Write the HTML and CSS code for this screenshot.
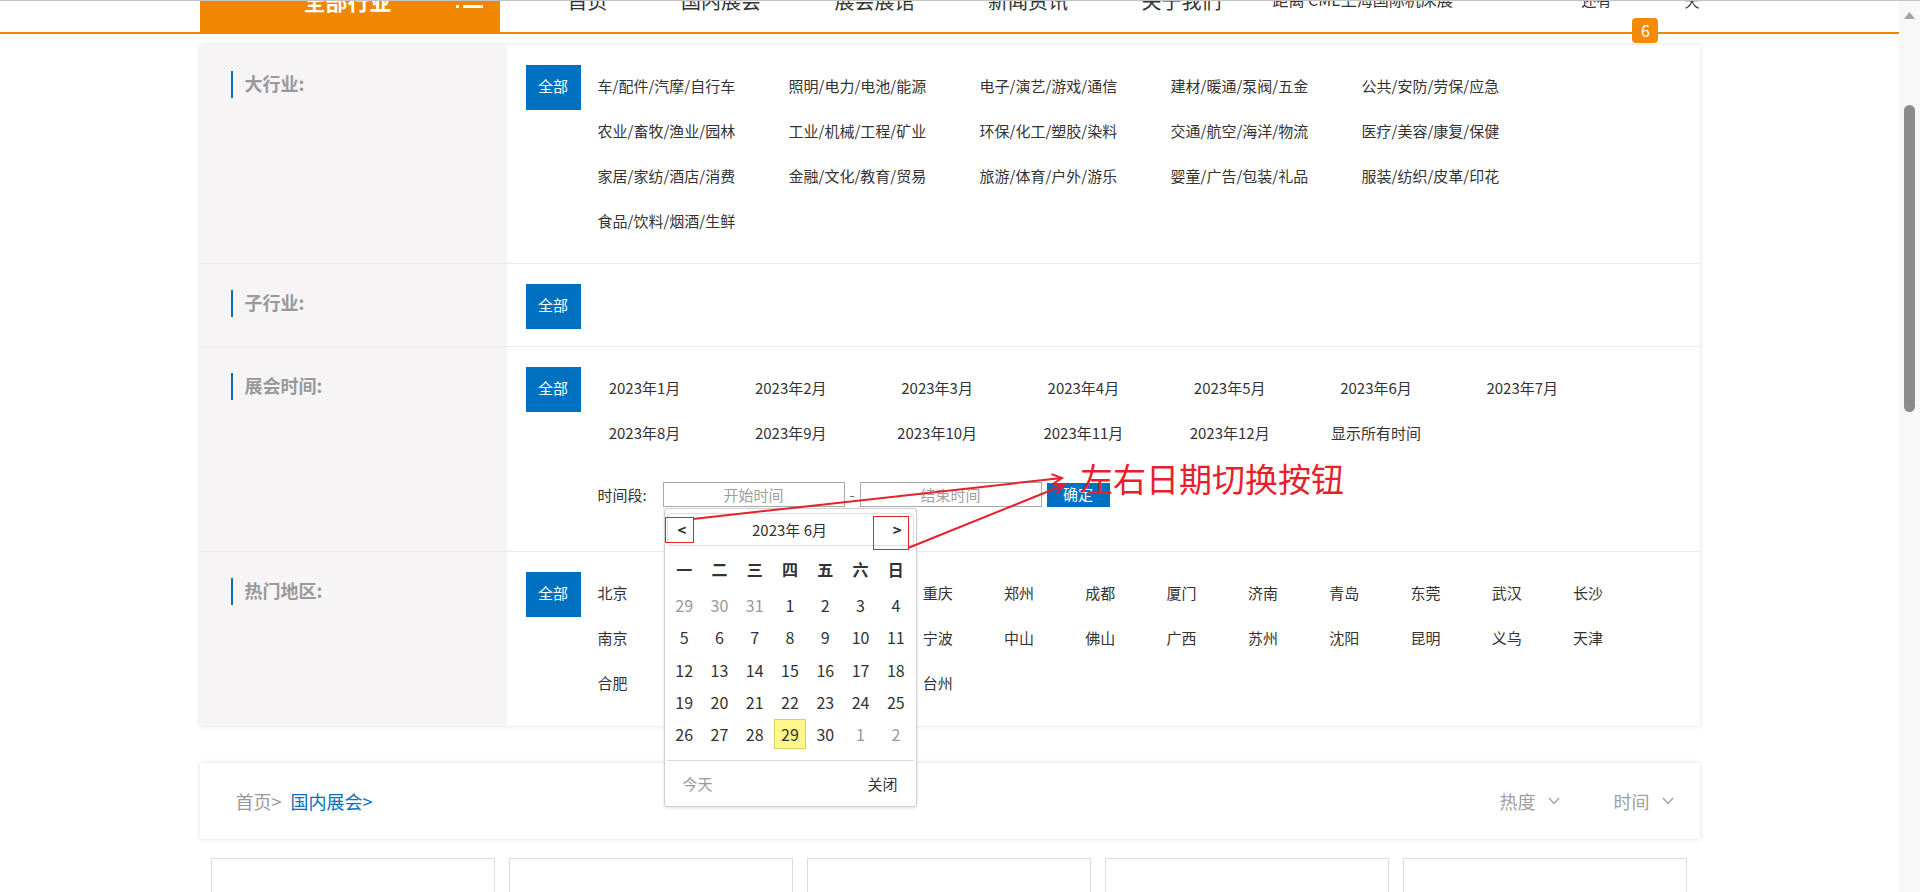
FILE: index.html
```html
<!DOCTYPE html>
<html lang="zh-CN">
<head>
<meta charset="utf-8">
<title>国内展会</title>
<link rel="stylesheet" href="styles.css">
</head>
<body>
<div class="topline"></div>
<div class="page">
  <header class="hd">
    <div class="hd-inner">
      <div class="cat">
        <span class="cat-t">全部行业</span>
        <svg class="cat-ic" width="27" height="22" viewBox="0 0 27 22"><rect x="0" y="2" width="3" height="3" fill="#fff"/><rect x="0" y="9" width="3" height="3" fill="#fff"/><rect x="0" y="16" width="3" height="3" fill="#fff"/><rect x="7" y="2" width="20" height="3" fill="#fff"/><rect x="7" y="9" width="20" height="3" fill="#fff"/><rect x="7" y="16" width="20" height="3" fill="#fff"/></svg>
      </div>
      <nav class="nav">
        <a href="#">首页</a>
        <a href="#" class="on">国内展会</a>
        <a href="#">展会展馆</a>
        <a href="#">新闻资讯</a>
        <a href="#">关于我们</a>
      </nav>
      <div class="count">
        <span class="count-name">距离 CME上海国际机床展</span>
        <span class="count-have">还有</span>
        <span class="badge">6</span>
        <span class="count-day">天</span>
      </div>
    </div>
  </header>

  <section class="filter">
    <div class="row">
      <div class="lab"><span>大行业:</span></div>
      <div class="opts">
        <a href="#" class="all">全部</a>
        <ul class="ind">
          <li>车/配件/汽摩/自行车</li><li>照明/电力/电池/能源</li><li>电子/演艺/游戏/通信</li><li>建材/暖通/泵阀/五金</li><li>公共/安防/劳保/应急</li>
          <li>农业/畜牧/渔业/园林</li><li>工业/机械/工程/矿业</li><li>环保/化工/塑胶/染料</li><li>交通/航空/海洋/物流</li><li>医疗/美容/康复/保健</li>
          <li>家居/家纺/酒店/消费</li><li>金融/文化/教育/贸易</li><li>旅游/体育/户外/游乐</li><li>婴童/广告/包装/礼品</li><li>服装/纺织/皮革/印花</li>
          <li>食品/饮料/烟酒/生鲜</li>
        </ul>
      </div>
    </div>
    <div class="row row-sub">
      <div class="lab"><span>子行业:</span></div>
      <div class="opts">
        <a href="#" class="all">全部</a>
      </div>
    </div>
    <div class="row row-time">
      <div class="lab"><span>展会时间:</span></div>
      <div class="opts opts-col">
        <div class="opts-top">
          <a href="#" class="all">全部</a>
          <ul class="months">
            <li>2023年1月</li><li>2023年2月</li><li>2023年3月</li><li>2023年4月</li><li>2023年5月</li><li>2023年6月</li><li>2023年7月</li>
            <li>2023年8月</li><li>2023年9月</li><li>2023年10月</li><li>2023年11月</li><li>2023年12月</li><li>显示所有时间</li>
          </ul>
        </div>
        <div class="range">
          <span class="range-lab">时间段:</span>
          <div class="dp">
            <input class="ipt" type="text" placeholder="开始时间">
            <div class="cal">
              <div class="cal-hd"><span class="cal-prev">&lt;</span><span class="cal-title">2023年 6月</span><span class="cal-next">&gt;</span></div>
              <div class="cal-week"><span>一</span><span>二</span><span>三</span><span>四</span><span>五</span><span>六</span><span>日</span></div>
              <div class="cal-days">
                <span class="d off">29</span><span class="d off">30</span><span class="d off">31</span><span class="d">1</span><span class="d">2</span><span class="d">3</span><span class="d">4</span>
                <span class="d">5</span><span class="d">6</span><span class="d">7</span><span class="d">8</span><span class="d">9</span><span class="d">10</span><span class="d">11</span>
                <span class="d">12</span><span class="d">13</span><span class="d">14</span><span class="d">15</span><span class="d">16</span><span class="d">17</span><span class="d">18</span>
                <span class="d">19</span><span class="d">20</span><span class="d">21</span><span class="d">22</span><span class="d">23</span><span class="d">24</span><span class="d">25</span>
                <span class="d">26</span><span class="d">27</span><span class="d">28</span><span class="d today"><b>29</b></span><span class="d">30</span><span class="d off">1</span><span class="d off">2</span>
              </div>
              <div class="cal-ft"><span class="cal-today">今天</span><span class="cal-close">关闭</span></div>
            </div>
          </div>
          <span class="dash">-</span>
          <input class="ipt" type="text" placeholder="结束时间">
          <a href="#" class="ok">确定</a>
        </div>
      </div>
    </div>
    <div class="row">
      <div class="lab"><span>热门地区:</span></div>
      <div class="opts">
        <a href="#" class="all">全部</a>
        <ul class="cities">
          <li>北京</li><li class="under">上海</li><li class="under">广州</li><li class="under">深圳</li><li>重庆</li><li>郑州</li><li>成都</li><li>厦门</li><li>济南</li><li>青岛</li><li>东莞</li><li>武汉</li><li>长沙</li>
          <li>南京</li><li class="under">杭州</li><li class="under">西安</li><li class="under">长春</li><li>宁波</li><li>中山</li><li>佛山</li><li>广西</li><li>苏州</li><li>沈阳</li><li>昆明</li><li>义乌</li><li>天津</li>
          <li>合肥</li><li class="under">福州</li><li class="under">南昌</li><li class="under">大连</li><li>台州</li>
        </ul>
      </div>
    </div>
  </section>

  <section class="crumb">
    <div class="crumb-path"><span class="c-home">首页&gt;</span><span class="c-cur">国内展会&gt;</span></div>
    <div class="sorts">
      <span class="sort">热度<svg width="12" height="8" viewBox="0 0 12 8"><path d="M1 1 L6 6.5 L11 1" fill="none" stroke="#a0a0a0" stroke-width="1.3"/></svg></span>
      <span class="sort">时间<svg width="12" height="8" viewBox="0 0 12 8"><path d="M1 1 L6 6.5 L11 1" fill="none" stroke="#a0a0a0" stroke-width="1.3"/></svg></span>
    </div>
  </section>

  <section class="cards">
    <div class="card"></div><div class="card"></div><div class="card"></div><div class="card"></div><div class="card"></div>
  </section>

  <svg class="anno" width="1899" height="892" viewBox="0 0 1899 892">
    <rect x="665.5" y="517.5" width="28" height="25" fill="none" stroke="#e8202a" stroke-width="1"/>
    <rect x="873.5" y="516.5" width="35" height="33" fill="none" stroke="#e8202a" stroke-width="1"/>
    <line x1="693" y1="519" x2="1062" y2="478" stroke="#e8202a" stroke-width="2"/>
    <polyline points="1051.5,474.1 1062,478 1052.6,484.1" fill="none" stroke="#e8202a" stroke-width="2"/>
    <line x1="908" y1="548" x2="1064" y2="485" stroke="#e8202a" stroke-width="2"/>
    <polyline points="1052.9,484.1 1064,485 1056.6,493.4" fill="none" stroke="#e8202a" stroke-width="2"/>
  </svg>
  <div class="anno-text">左右日期切换按钮</div>
</div>

<div class="sbar">
  <svg class="sbar-up" width="11" height="7" viewBox="0 0 11 7"><path d="M5.5 0 L11 7 L0 7 Z" fill="#a3a3a3"/></svg>
  <div class="sbar-thumb"></div>
</div>
</body>
</html>
```

FILE: styles.css
```css
* { box-sizing: border-box; margin: 0; padding: 0; }
html, body { height: 100%; overflow: hidden; }
body {
  font-family: "Noto Sans CJK SC", "Noto Sans", sans-serif;
  font-size: 15px;
  color: #333;
  background: #fff;
}
a { color: inherit; text-decoration: none; }
ul { list-style: none; }

.topline { position: fixed; left: 0; top: 0; right: 0; height: 1px; background: #c3c3c3; z-index: 50; }

.page { position: relative; width: calc(100% - 21px); }

/* header */
.hd { height: 34px; border-bottom: 2px solid #ef8700; white-space: nowrap; }
.hd-inner { width: 1500px; margin: 0 auto; height: 32px; display: flex; align-items: flex-start; }
.cat { width: 300px; height: 32px; flex: none; background: #ef8700; color: #fff; display: flex; align-items: flex-start; }
.cat-t { font-size: 22px; font-weight: bold; line-height: 22px; margin: -11px 0 0 104px; }
.cat-ic { margin: -11px 0 0 64px; display: block; flex: none; }
.nav { display: flex; flex: none; margin-left: 68px; }
.nav a { flex: none; font-size: 20px; line-height: 20px; margin-top: -9px; margin-right: 73.5px; color: #333; }
.nav a:last-child { margin-right: 0; }
.count { margin-left: auto; flex: none; display: flex; align-items: flex-start; }
.count-name { flex: none; width: 309px; font-size: 16px; line-height: 16px; margin-top: -9px; }
.count-have { flex: none; font-size: 15px; line-height: 15px; margin-top: -8px; }
.badge { flex: none; margin: 18px 0 0 21px; width: 26px; height: 25px; line-height: 25px; text-align: center; background: #f38b06; color: #fff; border-radius: 4px; font-size: 16px; }
.count-day { flex: none; margin: -7px 0 0 26px; font-size: 15px; line-height: 15px; }

/* filter box */
.filter { width: 1500px; margin: 11px auto 0; background: #fff; box-shadow: 0 0 5px rgba(0,0,0,.13); }
.row { display: flex; border-bottom: 1px solid #ebebeb; }
.row:last-child { border-bottom: 0; }
.lab { width: 307px; flex: none; background: #f6f4f5; padding: 26px 0 0 31px; }
.lab span { display: block; border-left: 2px solid #0a6fbd; padding-left: 12px; height: 27px; line-height: 25px; font-size: 18px; font-weight: bold; color: #999; }
.opts { flex: 1; display: flex; align-items: flex-start; padding: 20px 0 18px 19px; }
.row-sub .opts { padding-bottom: 17px; }
.row:last-child .opts { padding-bottom: 19px; }
.opts-col { flex-direction: column; padding-bottom: 44px; }
.opts-top { display: flex; align-items: flex-start; }
.all { display: block; flex: none; width: 55px; height: 45px; line-height: 42px; text-align: center; background: #0070c0; color: #fff; font-size: 15px; }

.ind, .months, .cities { white-space: nowrap; }
.ind li, .months li, .cities li { height: 45px; line-height: 41px; }
.ind { display: grid; grid-template-columns: repeat(5, 191px); margin-left: 17px; }
.months { display: grid; grid-template-columns: repeat(7, 128px); column-gap: 18.3px; text-align: center; }
.cities { display: grid; grid-template-columns: repeat(13, 81.3px); margin-left: 17px; }

/* time range */
.range { display: flex; align-items: center; margin: 25px 0 0 72px; height: 25px; }
.range-lab { width: 65px; flex: none; }
.dp { position: relative; }
.ipt { display: block; width: 182px; height: 25px; border: 1px solid #a9a9a9; font-family: inherit; font-size: 15px; text-align: center; color: #333; outline: none; background: #fff; }
.ipt::placeholder { color: #a0a0a0; }
.dash { width: 15px; text-align: center; color: #666; }
.ok { display: block; width: 63px; height: 24px; line-height: 22px; margin-left: 5px; background: #0070c0; color: #fff; text-align: center; }

/* calendar */
.cal { position: absolute; left: 1px; top: 26px; width: 253px; z-index: 5; background: #fff; border: 1px solid #cfcfcf; border-radius: 3px; box-shadow: 0 1px 3px rgba(0,0,0,.12); padding: 4px 2px 0 2px; }
.cal-hd { height: 33px; border: 1px solid #dcdcdc; border-radius: 4px; display: flex; align-items: center; justify-content: space-between; padding: 0 11px 0 10px; font-size: 15px; }
.cal-prev, .cal-next { font-weight: bold; font-size: 15px; }
.cal-week { display: grid; grid-template-columns: repeat(7, 1fr); margin-top: 3px; height: 40px; line-height: 40px; text-align: center; font-size: 16px; font-weight: bold; }
.cal-days { display: grid; grid-template-columns: repeat(7, 1fr); grid-auto-rows: 32.3px; text-align: center; font-size: 16px; }
.d { line-height: 32.3px; }
.d.off { color: #999; }
.d.today b { display: inline-block; font-weight: normal; width: 32px; height: 30px; line-height: 28px; margin-top: 1px; vertical-align: top; background: #fff78c; border: 1px solid #ddd060; }
.cal-ft { margin-top: 10px; border-top: 1px solid #dcdcdc; height: 46px; display: flex; align-items: center; justify-content: space-between; padding: 0 16px; font-size: 15px; }
.cal-today { color: #999; }

/* breadcrumb */
.crumb { width: 1500px; margin: 37px auto 0; height: 76px; display: flex; align-items: center; justify-content: space-between; padding: 0 26px 0 36px; background: #fff; box-shadow: 0 0 5px rgba(0,0,0,.13); font-size: 18px; }
.c-home { color: #999; }
.c-cur { color: #0a6fbd; margin-left: 9px; }
.sorts { display: flex; }
.sort { display: flex; align-items: center; color: #a0a0a0; margin-left: 54px; }
.sort svg { margin-left: 12px; }

/* cards */
.cards { width: 1500px; margin: 19px auto 0; display: flex; gap: 14px; padding-left: 11px; }
.card { width: 284px; height: 300px; flex: none; border: 1px solid #ddd; background: #fff; }

/* annotation */
.anno { position: absolute; left: 0; top: 0; z-index: 10; pointer-events: none; }
.anno-text { position: absolute; left: 1080px; top: 462px; z-index: 10; font-size: 33px; line-height: 33px; color: #e8202a; white-space: nowrap; }

/* fake scrollbar */
.sbar { position: fixed; right: 0; top: 1px; bottom: 0; width: 21px; background: #f8f8f8; z-index: 40; }
.sbar-up { display: block; margin: 11px 0 0 5px; }
.sbar-thumb { width: 11px; height: 307px; margin: 86px 0 0 5px; background: #8b8b8b; border-radius: 6px; }
```
